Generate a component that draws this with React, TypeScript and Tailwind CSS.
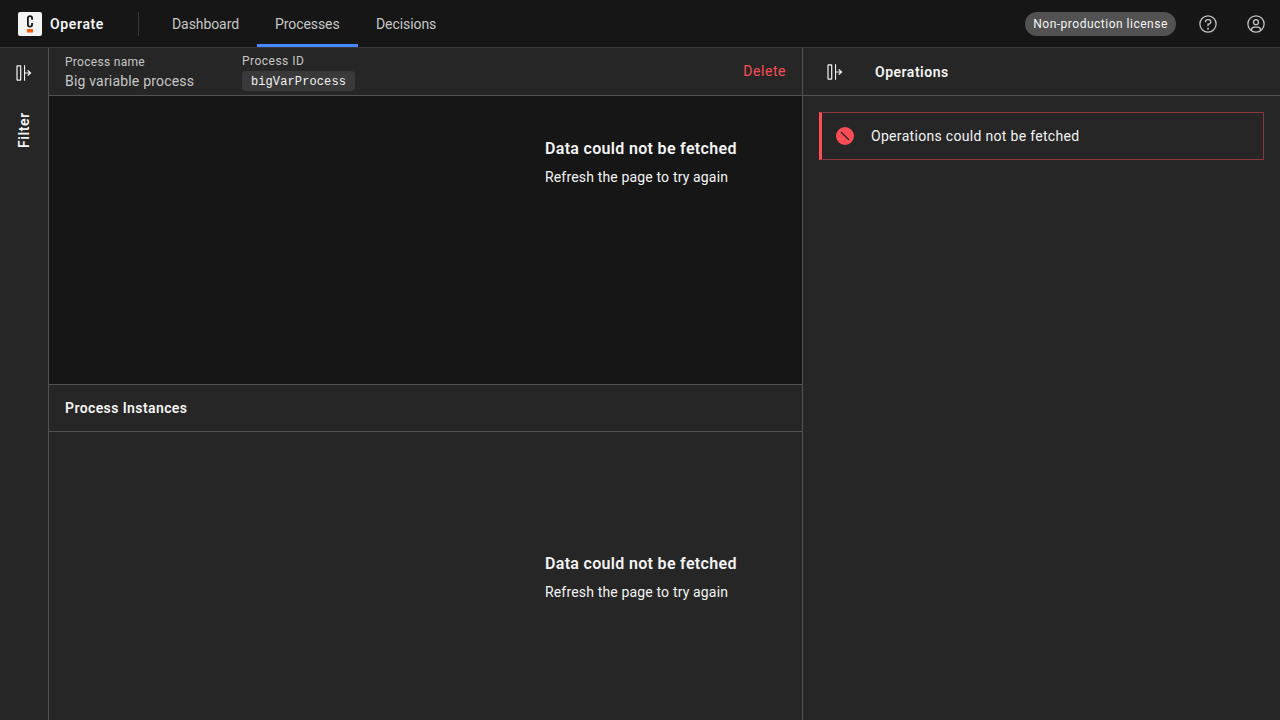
import type { ReactNode } from "react";

function PanelToggleIcon() {
  return (
    <svg className="size-4 shrink-0" viewBox="0 0 16 16" fill="currentColor">
      <path fillRule="evenodd" d="M0.4 1.2C0.4 0.6 0.8 0.3 1.3 0.3H4.3C4.9 0.3 5.3 0.6 5.3 1.2V14.8C5.3 15.4 4.9 15.7 4.3 15.7H1.3C0.8 15.7 0.4 15.4 0.4 14.8ZM1.6 1.4V14.6H4.1V1.4Z" />
      <path d="M8 0.3H9.1V7.4H12.9L11.3 5.8L12.1 5L15.5 8L12.1 11L11.3 10.2L12.9 8.6H9.1V15.7H8Z" />
    </svg>
  );
}

function HelpIcon() {
  return (
    <svg className="size-5" viewBox="0 0 32 32" fill="currentColor">
      <path d="M16,2A14,14,0,1,0,30,16,14,14,0,0,0,16,2Zm0,26A12,12,0,1,1,28,16,12,12,0,0,1,16,28Z" />
      <circle cx="16" cy="23.5" r="1.5" />
      <path d="M17,8H15.5A4.49,4.49,0,0,0,11,12.5V13h2v-.5A2.5,2.5,0,0,1,15.5,10H17a2.5,2.5,0,0,1,0,5H15v4.5h2V17a4.5,4.5,0,0,0,0-9Z" />
    </svg>
  );
}

function UserIcon() {
  return (
    <svg className="size-5" viewBox="0 0 32 32" fill="currentColor">
      <path d="M16,8a5,5,0,1,0,5,5A5,5,0,0,0,16,8Zm0,8a3,3,0,1,1,3-3A3.0034,3.0034,0,0,1,16,16Z" />
      <path d="M16,2A14,14,0,1,0,30,16,14.0158,14.0158,0,0,0,16,2ZM10,26.3765V25a3.0033,3.0033,0,0,1,3-3h6a3.0033,3.0033,0,0,1,3,3v1.3765a11.8989,11.8989,0,0,1-12,0Zm13.9925-1.4507A5.0016,5.0016,0,0,0,19,20H13a5.0016,5.0016,0,0,0-4.9925,4.9258,12,12,0,1,1,15.985,0Z" />
    </svg>
  );
}

function Logo() {
  return (
    <svg className="size-6" viewBox="0 0 24 24">
      <rect width="24" height="24" rx="2" fill="#f4f4f4" />
      <path d="M14.1 7.8V6.2Q14.1 4.1 12 4.1Q9.9 4.1 9.9 6.2V12.6Q9.9 14.7 12 14.7Q14.1 14.7 14.1 12.6V11" fill="none" stroke="#161616" strokeWidth="1.8" />
      <rect x="9" y="17" width="6" height="3.5" fill="#fc5d0d" />
    </svg>
  );
}

function NavItem({ children, active = false }: { children: ReactNode; active?: boolean }) {
  return (
    <a className={`flex h-full items-center border-b-3 px-[18px] pt-[3px] text-sm text-[#c6c6c6] ${active ? "w-[101px] border-[#4589ff]" : "border-transparent"}`}>
      {children}
    </a>
  );
}

function ErrorMessage() {
  return (
    <div className="w-[192px] whitespace-nowrap">
      <h3 className="text-base leading-6 font-semibold tracking-[0.32px]">Data could not be fetched</h3>
      <p className="mt-[7px] text-sm leading-[18px] tracking-[0.16px]">Refresh the page to try again</p>
    </div>
  );
}

export default function App() {
  return (
    <div className="flex h-screen flex-col overflow-hidden bg-[#262626] font-['Roboto',sans-serif] text-sm text-[#f4f4f4]">
      <header className="flex h-12 shrink-0 items-stretch border-b border-[#393939] bg-[#161616]">
        <div className="flex w-[138px] items-center gap-2 pl-[18px]">
          <Logo />
          <span className="font-semibold tracking-[0.63px]">Operate</span>
        </div>
        <div className="mr-[15px] h-6 w-px self-center bg-[#393939]" />
        <nav className="flex h-full tracking-[-0.08px]">
          <NavItem>Dashboard</NavItem>
          <NavItem active>Processes</NavItem>
          <NavItem>Decisions</NavItem>
        </nav>
        <div className="ml-auto flex items-center">
          <span className="mr-2 flex h-6 w-[151px] items-center justify-center rounded-full bg-[#525252] text-xs tracking-[0.5px] whitespace-nowrap">Non-production license</span>
          <button className="flex size-12 items-center justify-center text-[#c6c6c6]"><HelpIcon /></button>
          <button className="flex size-12 items-center justify-center text-[#c6c6c6]"><UserIcon /></button>
        </div>
      </header>

      <div className="flex min-h-0 flex-1">
        <aside className="flex w-[49px] shrink-0 flex-col items-center border-r border-[#525252] pt-[17px]">
          <PanelToggleIcon />
          <span className="mt-[30px] h-[37px] rotate-180 leading-[18px] font-semibold tracking-[0.6px] [writing-mode:vertical-rl]">Filter</span>
        </aside>

        <main className="flex w-[754px] shrink-0 flex-col border-r border-[#525252]">
          <div className="flex h-12 shrink-0 items-start border-b border-[#525252] px-4 text-[#c6c6c6]">
            <div className="w-[177px] pt-1.5">
              <div className="text-xs leading-4 tracking-[0.3px]">Process name</div>
              <div className="mt-0.5 leading-[18px] tracking-[0.19px]">Big variable process</div>
            </div>
            <div className="pt-[5px]">
              <div className="text-xs leading-4 tracking-[0.48px]">Process ID</div>
              <div className="mt-0.5 flex h-5 w-[113px] items-center justify-center rounded-sm bg-[#393939] pt-px font-['Liberation_Mono',monospace] text-xs tracking-[0.12px] text-[#f4f4f4]">bigVarProcess</div>
            </div>
            <button className="mt-3.5 ml-auto leading-[18px] tracking-[0.55px] text-[#fa4d56]">Delete</button>
          </div>
          <section className="flex h-72 shrink-0 justify-end bg-[#161616] pt-[41px] pr-[65px]">
            <ErrorMessage />
          </section>
          <h2 className="flex h-12 shrink-0 items-center border-y border-[#525252] px-4 font-semibold tracking-[0.4px]">Process Instances</h2>
          <section className="flex flex-1 items-center justify-end pt-px pr-[65px]">
            <ErrorMessage />
          </section>
        </main>

        <aside className="flex min-w-0 flex-1 flex-col">
          <div className="flex h-12 items-center border-b border-[#525252] pl-6">
            <PanelToggleIcon />
            <h2 className="ml-8 font-semibold tracking-[0.5px]">Operations</h2>
          </div>
          <div className="m-4 flex h-12 items-center border border-l-3 border-[#8a363c] border-l-[#fa4d56] pl-3.5">
            <svg className="size-[18px]" viewBox="0 0 18 18">
              <circle cx="9" cy="9" r="9" fill="#fa4d56" />
              <path d="M5 5L13 13" stroke="#262626" strokeWidth="1.3" />
            </svg>
            <span className="ml-[17px] tracking-[0.31px]">Operations could not be fetched</span>
          </div>
        </aside>
      </div>
    </div>
  );
}
